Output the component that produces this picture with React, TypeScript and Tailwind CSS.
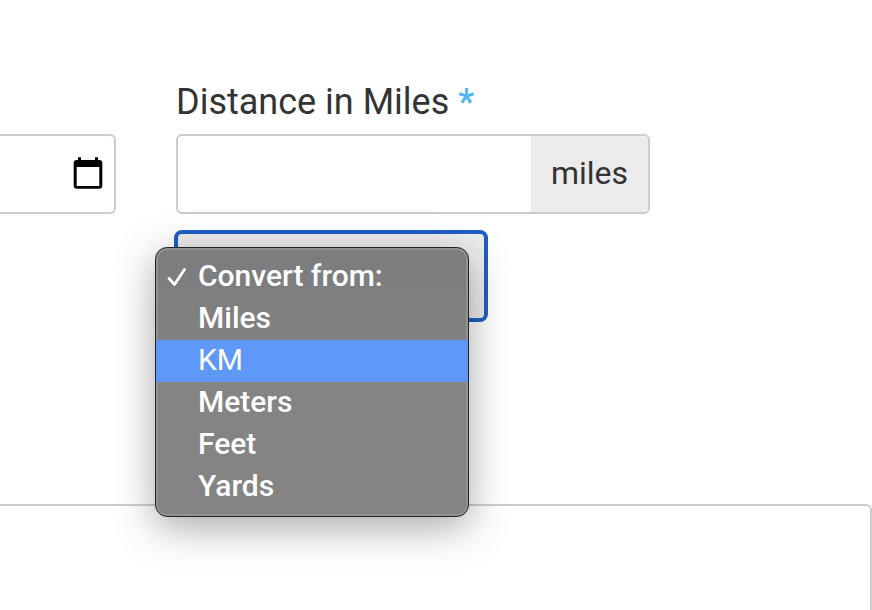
import { useState } from "react";

const units = ["Convert from:", "Miles", "KM", "Meters", "Feet", "Yards"];

function CalendarIcon() {
  return (
    <svg width="30" height="34" viewBox="0 0 30 34" aria-hidden="true">
      <path
        fill="#000"
        fillRule="evenodd"
        d="M5 .3h3V3h14V.3h3V3h1.300a3 3 0 0 1 3 3v22.700a3 3 0 0 1-3 3H3.700a3 3 0 0 1-3-3V6a3 3 0 0 1 3-3H5zM3.700 10v19h22.600V10z"
      />
    </svg>
  );
}

function CheckIcon() {
  return (
    <svg width="20" height="20" viewBox="0 0 20 20" fill="none" aria-hidden="true">
      <path d="M2 11.500l5.500 6L17.500 2.500" stroke="#fff" strokeWidth="2.800" strokeLinecap="round" strokeLinejoin="round" />
    </svg>
  );
}

export default function App() {
  const [date, setDate] = useState("");
  const [distance, setDistance] = useState("");
  const [unit, setUnit] = useState("Convert from:");
  const [active, setActive] = useState("KM");
  const [open, setOpen] = useState(true);

  const handlePick = (name: string) => {
    setUnit(name);
    setOpen(false);
  };

  return (
    <main className="h-screen overflow-hidden bg-white pt-20 font-['Roboto',sans-serif] text-[#333]">
      <div className="flex items-start gap-15">
        {/* Date */}
        <div className="mt-[54px] flex h-20 w-29 shrink-0 items-center rounded-r-md border-2 border-l-0 border-[#ccc] pr-[11px]">
          <input
            type="text"
            aria-label="Date"
            className="h-full min-w-0 flex-1 outline-none"
            value={date}
            onChange={(e) => setDate(e.target.value)}
          />
          <button type="button" aria-label="Open calendar" className="shrink-0">
            <CalendarIcon />
          </button>
        </div>

        {/* Distance */}
        <div className="max-w-[474px] flex-1">
          <label htmlFor="distance" className="block h-[54px] text-4xl leading-[44px]">
            Distance in Miles <span className="font-medium text-[#4db5f0]">*</span>
          </label>
          <div className="flex h-20 overflow-hidden rounded-md border-2 border-[#ccc]">
            <input
              id="distance"
              type="text"
              className="min-w-0 flex-1 px-4 text-[32px] outline-none"
              value={distance}
              onChange={(e) => setDistance(e.target.value)}
            />
            <span className="bg-[#ececec] px-5 text-[32px] leading-[74px]">miles</span>
          </div>

          <div className="relative mt-4 -ml-0.5 w-[314px]">
            <select
              aria-label="Convert from"
              className="block h-23 w-full appearance-none rounded-lg border-4 border-[#205fc5] bg-[#eee] px-5 text-[30px] outline-none"
              value={unit}
              onMouseDown={(e) => {
                e.preventDefault();
                setOpen(!open);
              }}
              onChange={(e) => setUnit(e.target.value)}
            >
              {units.map((name) => (
                <option key={name}>{name}</option>
              ))}
            </select>

            {open && (
              <div
                role="listbox"
                aria-label="Units"
                className="absolute top-[17px] -left-[19px] w-[314px] rounded-xl border border-[#222] bg-linear-to-b from-[#7b7c7e] via-[#848484] to-[#848484] py-2 text-[30px] text-white shadow-[inset_0_0_0_2px_#929292,0_10px_40px_rgba(0,0,0,0.35)]"
              >
                {units.map((name) => (
                  <button
                    key={name}
                    type="button"
                    role="option"
                    aria-selected={name === unit}
                    onMouseEnter={() => setActive(name)}
                    onClick={() => handlePick(name)}
                    className={`flex h-[42px] w-full items-start pl-[11px] text-left leading-10 ${
                      name === active ? "bg-[#5e99f8]" : "font-medium"
                    }`}
                  >
                    <span className="flex h-[42px] w-[31px] shrink-0 items-center">
                      {name === unit && <CheckIcon />}
                    </span>
                    {name}
                  </button>
                ))}
              </div>
            )}
          </div>
        </div>
      </div>

      {/* Notes */}
      <textarea
        aria-label="Notes"
        className="mt-[182px] block h-40 w-full resize-none rounded-tr-md border-2 border-l-0 border-[#ccc] p-4 text-[32px] outline-none"
      />
    </main>
  );
}
